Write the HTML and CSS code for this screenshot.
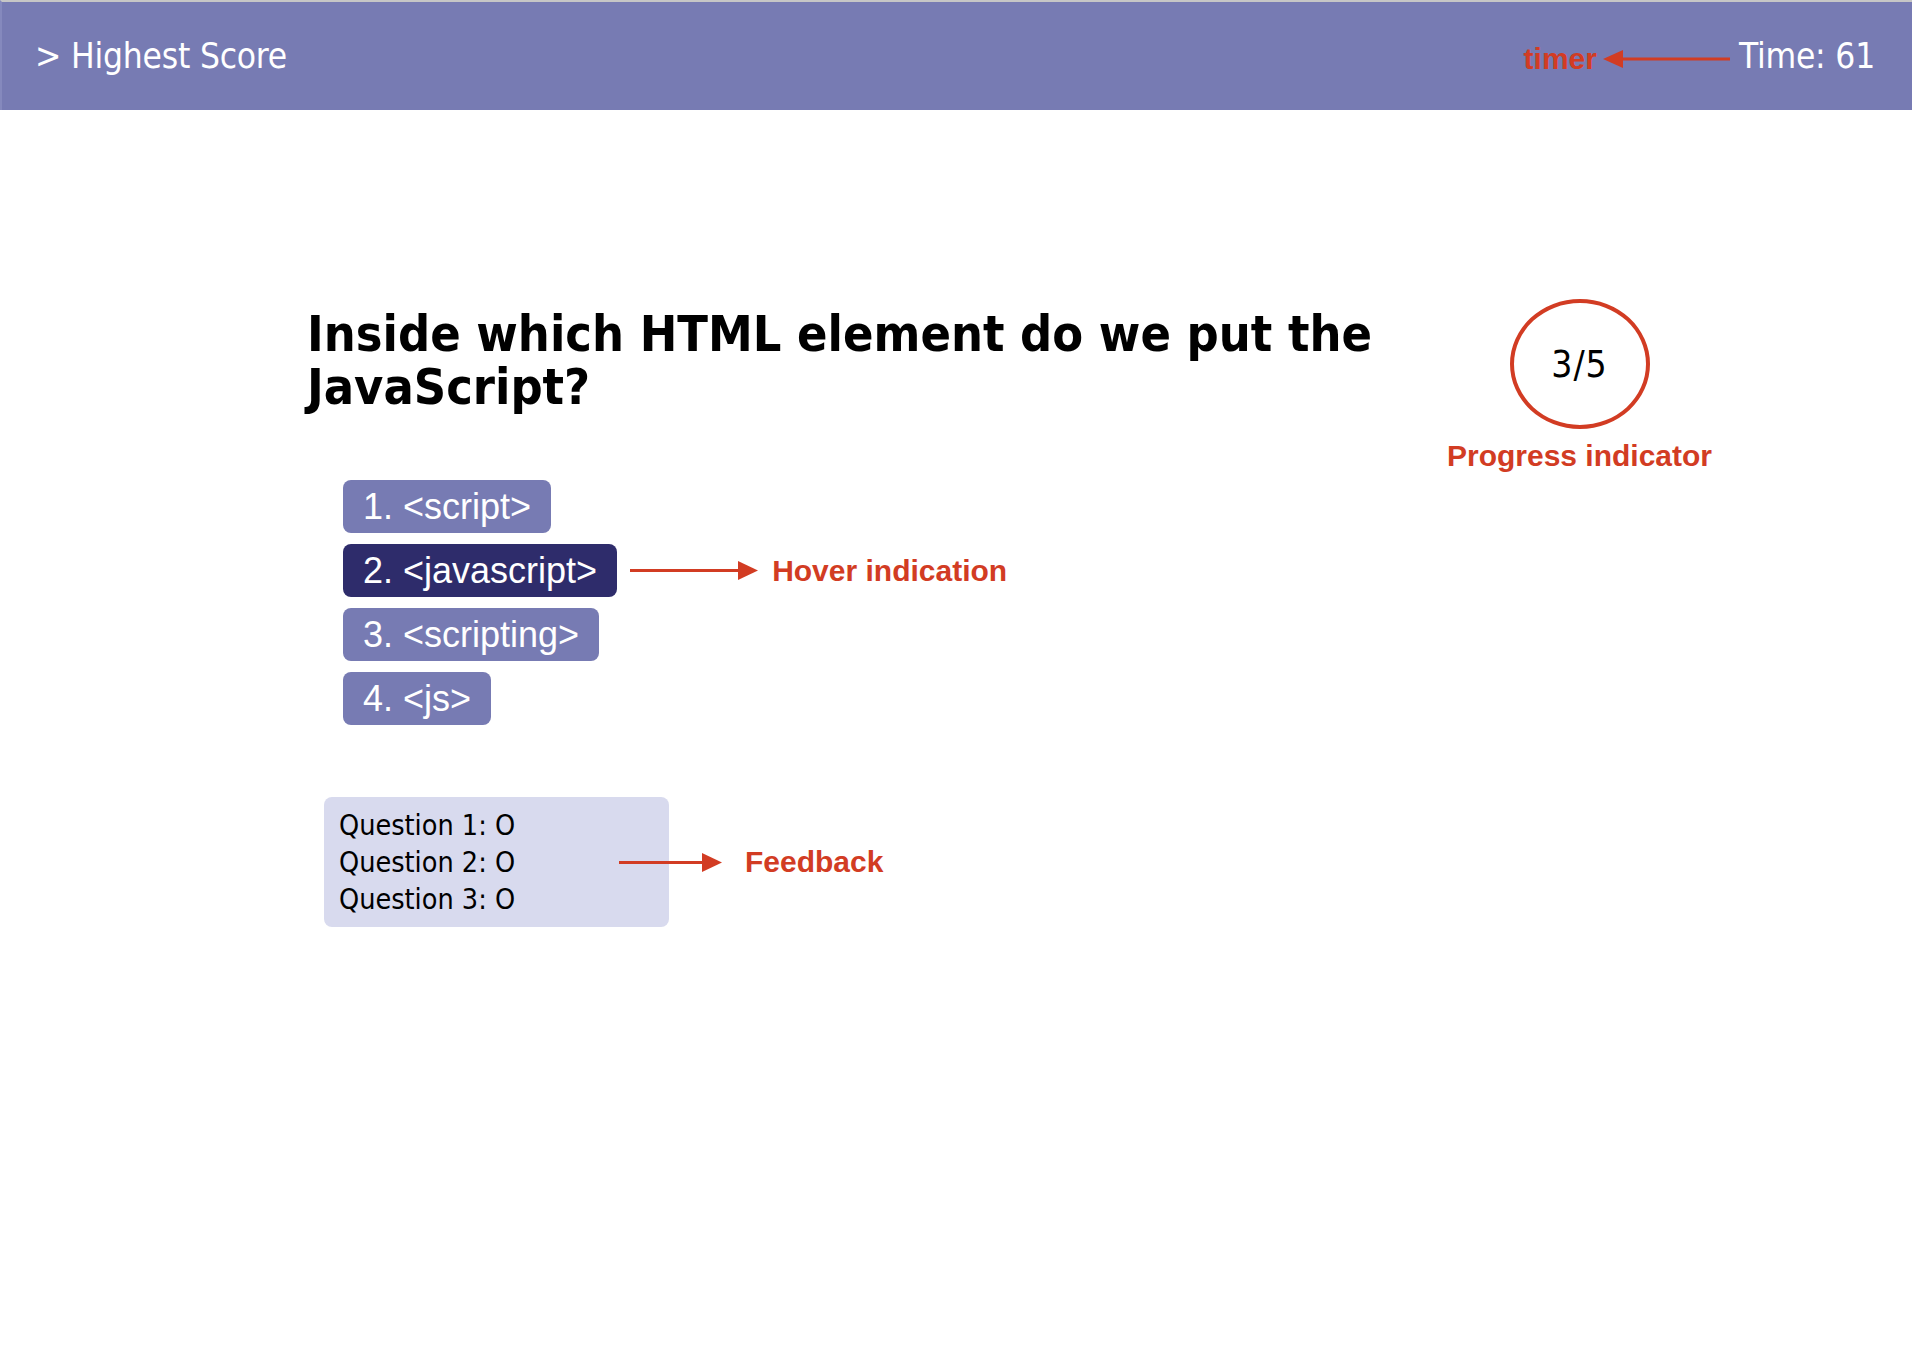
FILE: index.html
```html
<!DOCTYPE html>
<html lang="en">
<head>
<meta charset="utf-8">
<title>Quiz</title>
<link rel="stylesheet" href="styles.css">
</head>
<body>
<header class="topbar">
  <div class="highscore">&gt; Highest Score</div>
  <div class="timer-group">
    <span class="note">timer</span>
    <svg class="arrow-left" width="127" height="18" viewBox="0 0 127 18"><polygon points="0,9 20,0 20,18" fill="#d23c23"/><rect x="18" y="7.5" width="109" height="3" fill="#d23c23"/></svg>
    <span class="time">Time: 61</span>
  </div>
</header>
<main class="main">
  <section class="left">
    <h1 class="question">Inside which HTML element do we put the JavaScript?</h1>
    <ol class="answers">
      <li class="answer-row"><span class="answer">1. &lt;script&gt;</span></li>
      <li class="answer-row"><span class="answer hover">2. &lt;javascript&gt;</span>
        <svg class="arrow-right hover-arrow" width="128" height="19" viewBox="0 0 128 19"><rect x="0" y="8" width="110" height="3" fill="#d23c23"/><polygon points="108,0 128,9.5 108,19" fill="#d23c23"/></svg>
        <span class="note">Hover indication</span></li>
      <li class="answer-row"><span class="answer">3. &lt;scripting&gt;</span></li>
      <li class="answer-row"><span class="answer">4. &lt;js&gt;</span></li>
    </ol>
    <div class="feedback-row">
      <div class="feedback">
        <div>Question 1: O</div>
        <div>Question 2: O</div>
        <div>Question 3: O</div>
      </div>
      <div class="feedback-note">
        <svg class="arrow-right" width="103" height="19" viewBox="0 0 103 19"><rect x="0" y="8" width="85" height="3" fill="#d23c23"/><polygon points="83,0 103,9.5 83,19" fill="#d23c23"/></svg>
        <span class="note">Feedback</span>
      </div>
    </div>
  </section>
  <aside class="progress">
    <div class="ring">3/5</div>
    <div class="note">Progress indicator</div>
  </aside>
</main>
</body>
</html>
```

FILE: styles.css
```css
html, body {
  margin: 0;
  padding: 0;
  background: #ffffff;
}
body {
  font-family: "DejaVu Sans Condensed", "DejaVu Sans", sans-serif;
  font-stretch: condensed;
  color: #000;
}
.topbar {
  box-sizing: border-box;
  height: 110px;
  background: #777bb3;
  border-top: 2px solid #c6c6c6;
  border-left: 2px solid #8589bd;
  display: flex;
  align-items: center;
  justify-content: space-between;
  padding: 0 37px 0 33px;
  color: #fff;
}
.highscore, .time {
  font-size: 35px;
  line-height: 40px;
  letter-spacing: -0.2px;
}
.timer-group {
  display: flex;
  align-items: baseline;
}
.timer-group .note {
  margin-right: 6px;
  position: relative;
  top: 1px;
}
.arrow-left {
  margin-right: 9px;
}
.note {
  font-family: "Liberation Sans", Arial, sans-serif;
  font-stretch: normal;
  font-weight: bold;
  font-size: 30px;
  color: #d23c23;
  white-space: nowrap;
}
.main {
  display: flex;
  align-items: flex-start;
  padding: 189px 0 0 307px;
}
.left {
  width: 1120px;
  margin-right: 20px;
}
.question {
  margin: 9px 0 0 0;
  font-size: 50px;
  line-height: 53px;
  font-weight: bold;
}
.answers {
  list-style: none;
  margin: 66px 0 0 36px;
  padding: 0;
  display: flex;
  flex-direction: column;
  gap: 11px;
}
.answer-row {
  display: flex;
  align-items: center;
}
.answer {
  font-family: "Liberation Sans", Arial, sans-serif;
  font-stretch: normal;
  font-size: 36px;
  line-height: 41px;
  padding: 6px 20px;
  background: #777bb3;
  color: #fff;
  border-radius: 8px;
}
.answer.hover {
  background: #2e2c6b;
}
.hover-arrow {
  margin: 0 14px 0 13px;
}
.feedback-row {
  position: relative;
  margin: 72px 0 0 17px;
}
.feedback {
  box-sizing: border-box;
  width: 345px;
  padding: 9.5px 15px;
  background: #d8daee;
  border-radius: 8px;
  font-size: 28.5px;
  line-height: 37px;
}
.feedback-note {
  position: absolute;
  left: 295px;
  top: 0;
  height: 130px;
  display: flex;
  align-items: center;
  gap: 23px;
}
.progress {
  width: 265px;
  display: flex;
  flex-direction: column;
  align-items: center;
}
.ring {
  box-sizing: border-box;
  width: 140px;
  height: 130px;
  border: 4px solid #d23c23;
  border-radius: 50%;
  display: flex;
  align-items: center;
  justify-content: center;
  font-size: 37px;
  letter-spacing: 1px;
}
.progress .note {
  margin-top: 9px;
  line-height: 35px;
}
```
